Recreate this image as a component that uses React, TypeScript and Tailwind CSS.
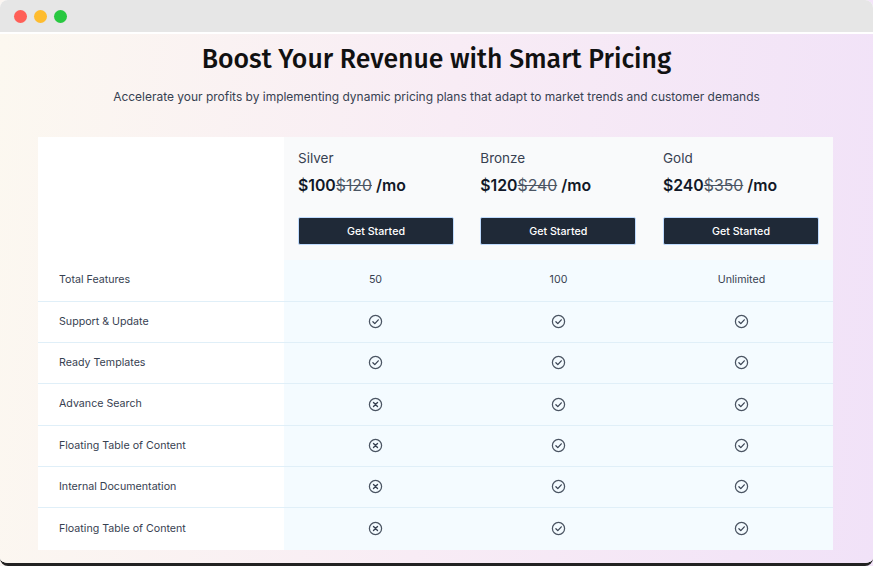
const rows: [string, string | boolean, string | boolean, string | boolean, string][] = [
  ["Total Features", "50", "100", "Unlimited", "h-[42px]"],
  ["Support & Update", true, true, true, "h-[41px]"],
  ["Ready Templates", true, true, true, "h-[41px]"],
  ["Advance Search", false, true, true, "h-[42px]"],
  ["Floating Table of Content", false, true, true, "h-[41px]"],
  ["Internal Documentation", false, true, true, "h-[41px]"],
  ["Floating Table of Content", false, true, true, "h-[42px]"],
];

const plans = [
  { name: "Silver", price: "$100", old: "$120" },
  { name: "Bronze", price: "$120", old: "$240" },
  { name: "Gold", price: "$240", old: "$350" },
];

function Check() {
  return (
    <svg width="15" height="15" viewBox="0 0 15 15" fill="none" stroke="#4b5563" strokeWidth="1.25" strokeLinecap="round" strokeLinejoin="round">
      <circle cx="7.5" cy="7.5" r="6.1" />
      <path d="M4.9 7.7 L6.8 9.6 L10.3 5.8" stroke="#374151" />
    </svg>
  );
}

function Cross() {
  return (
    <svg width="15" height="15" viewBox="0 0 15 15" fill="none" stroke="#4b5563" strokeWidth="1.25" strokeLinecap="round">
      <circle cx="7.5" cy="7.5" r="6.1" />
      <path d="M5.5 5.5 L9.5 9.5 M9.5 5.5 L5.5 9.5" stroke="#374151" strokeWidth="1.4" />
    </svg>
  );
}

function Cell({ value }: { value: string | boolean }) {
  return (
    <div className="flex items-center justify-center pb-[1px] text-[10.67px] text-[#374151]">
      {value === true ? <Check /> : value === false ? <Cross /> : value}
    </div>
  );
}

export default function App() {
  return (
    <div className="h-[566px] w-[873px] overflow-hidden bg-[linear-gradient(90deg,#fbf6f2,#f3e4f9)] font-['Inter',sans-serif]">
      <div className="h-[566px] overflow-hidden rounded-[8px] border-b-[3px] border-[#222222] bg-white">
        <div className="flex h-[32px] items-center gap-[7px] bg-[#e6e6e6] pl-[14px]">
          <span className="h-[13px] w-[13px] rounded-full bg-[#ff5f57]" />
          <span className="h-[13px] w-[13px] rounded-full bg-[#febc2e]" />
          <span className="h-[13px] w-[13px] rounded-full bg-[#28c840]" />
        </div>
        <div className="mt-[2px] h-[529px] bg-[linear-gradient(95deg,#fcf8f0_0%,#f8ecf5_50%,#f1e2f8_100%)] px-[38px]">
          <h1 className="pt-[8px] text-center font-['Fira_Sans','Noto_Sans',sans-serif] text-[26.6px] font-medium leading-[34px] text-[#111111]">
            Boost Your Revenue with Smart Pricing
          </h1>
          <p className="mt-[11px] text-center text-[11.98px] leading-[20px] text-[#374151]">
            Accelerate your profits by implementing dynamic pricing plans that adapt to market trends and customer demands
          </p>
          <div className="mt-[30px] grid grid-cols-[246px_182.3px_182.7px_184px]">
            <div className="bg-white" />
            {plans.map((p) => (
              <div key={p.name} className="h-[123px] bg-[#f9fafb] pl-[14px] pr-[14px] pt-[12px]">
                <div className="text-[13.5px] leading-[18px] text-[#374151]">{p.name}</div>
                <div className="mt-[9px] text-[15.8px] font-semibold leading-[20px] text-[#111827]">
                  {p.price}
                  <span className="font-normal text-[#4b5563] line-through">{p.old}</span> /mo
                </div>
                <button className="mt-[21px] block h-[28px] w-[156px] rounded-[2px] border border-[#bfdbfe] bg-[#1f2937] pt-[1px] text-[10.67px] font-medium text-white">
                  Get Started
                </button>
              </div>
            ))}
            {rows.map(([label, a, b, c, h], i) => (
              <div
                key={i}
                className={`col-span-4 grid grid-cols-[246px_183px_183px_183px] ${h} ${i < rows.length - 1 ? "border-b border-[#e0eff8]" : ""}`}
              >
                <div className="flex items-center bg-white pb-[1px] pl-[21px] text-[10.67px] text-[#374151]">{label}</div>
                <div className="col-span-3 grid grid-cols-3 bg-[#f4fbff]">
                  <Cell value={a} />
                  <Cell value={b} />
                  <Cell value={c} />
                </div>
              </div>
            ))}
          </div>
        </div>
      </div>
    </div>
  );
}
